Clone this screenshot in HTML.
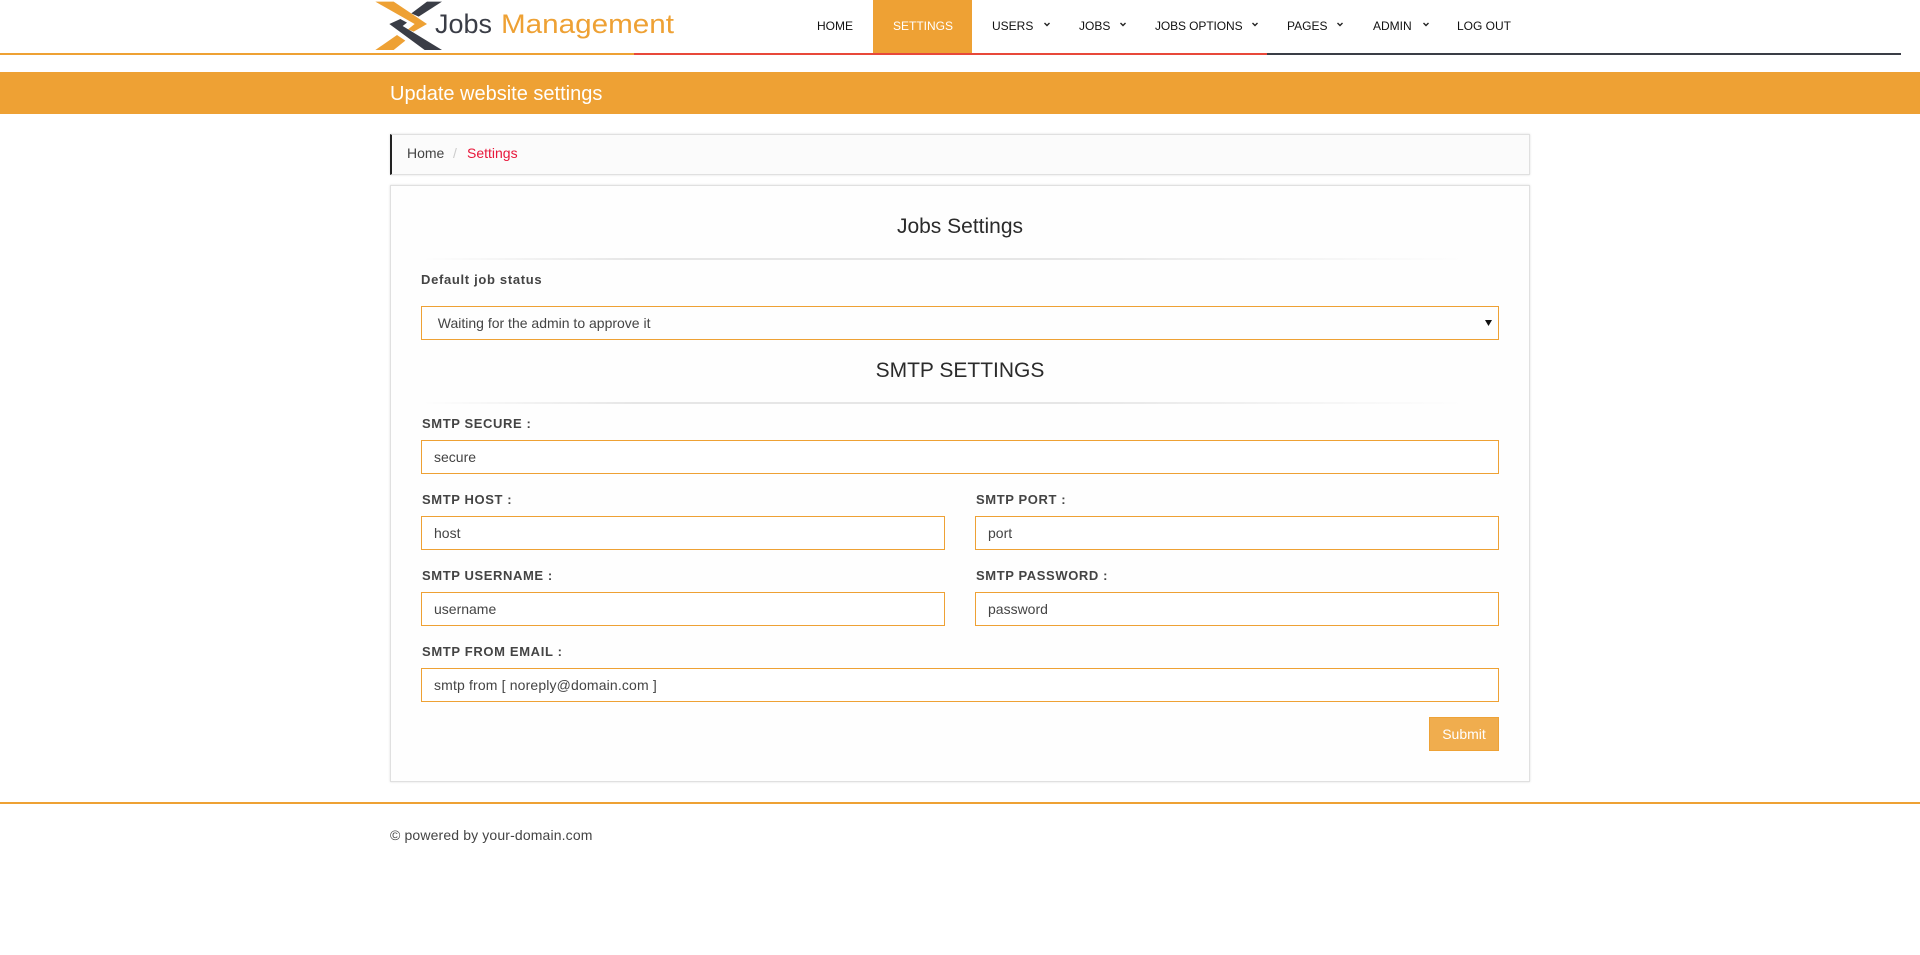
<!DOCTYPE html>
<html lang="en">
<head>
<meta charset="utf-8">
<title>Update website settings</title>
<style>
*{box-sizing:border-box}
html,body{margin:0;padding:0;background:#fff;width:1920px;height:955px;overflow:hidden;font-family:"Liberation Sans",Arial,sans-serif;color:#444;font-size:14px}
.a{position:absolute;white-space:nowrap}
.line{position:absolute;top:53px;height:2px}
.nav{position:absolute;top:0;height:53px;line-height:53px;font-size:12px;color:#111;white-space:nowrap}
.caret{position:absolute;top:22px}
.box{position:absolute;left:390px;width:1140px;border:1px solid #e0e0e0;box-shadow:0 0 2px rgba(0,0,0,.14)}
.hr{position:absolute;left:421px;width:1078px;height:2px;background:linear-gradient(to right,rgba(225,225,225,0),#e6e6e6 20%,#e6e6e6 60%,rgba(225,225,225,0) 97%)}
.ttl{position:absolute;left:390px;width:1140px;text-align:center;color:#2b2b2b;line-height:30px;font-size:21px}
label{position:absolute;font-size:13px;font-weight:bold;letter-spacing:.6px;line-height:18px;color:#444;white-space:nowrap}
input{position:absolute;height:34px;border:1px solid #eea134;background:#fff;padding:0 12px;font:14px "Liberation Sans",Arial,sans-serif;color:#444;outline:0;border-radius:0}
select{position:absolute;left:421px;top:306px;width:1078px;height:34px;border:1px solid #eea134;background:transparent;padding:0 12px 0 8px;font:14px "Liberation Sans",Arial,sans-serif;color:#444;appearance:none;-webkit-appearance:none;border-radius:0;outline:0}
button{position:absolute;left:1429px;top:717px;width:70px;height:34px;background:#f0ad4e;border:1px solid #eea236;color:#fff;font:14px "Liberation Sans",Arial,sans-serif;padding:0;border-radius:0}
</style>
</head>
<body>
<svg class="a" style="left:370px;top:0" width="100" height="56" viewBox="0 0 300 168">
<polygon fill="#eea134" points="16,5 71,5 171,72 131,95 114,88 134,72"/>
<polygon fill="#3a3d46" points="124,40 171,5 216,5 146,50"/>
<polygon fill="#3a3d46" points="58,72 91,57 111,68 98,78 216,150 164,150"/>
<polygon fill="#eea134" points="16,150 81,105 106,122 71,150"/>
</svg>
<svg class="a" style="left:430px;top:0;overflow:visible" width="260" height="50">
<text x="5" y="33" font-family="Liberation Sans" font-size="27" fill="#3a3d46" textLength="57" lengthAdjust="spacingAndGlyphs">Jobs</text>
<text x="71" y="33" font-family="Liberation Sans" font-size="27" fill="#eea134" textLength="173" lengthAdjust="spacingAndGlyphs">Management</text>
</svg>

<div class="line" style="left:0;width:634px;background:#eea134"></div>
<div class="line" style="left:634px;width:633px;background:#e8483a"></div>
<div class="line" style="left:1267px;width:634px;background:#3a3d46"></div>

<div class="a" style="left:873px;top:0;width:99px;height:53px;background:#eea134"></div>
<div class="nav" style="left:817px">HOME</div>
<div class="nav" style="left:893px;color:#fff">SETTINGS</div>
<div class="nav" style="left:992px">USERS</div>
<div class="nav" style="left:1079px">JOBS</div>
<div class="nav" style="left:1155px;letter-spacing:-.1px">JOBS OPTIONS</div>
<div class="nav" style="left:1287px">PAGES</div>
<div class="nav" style="left:1373px">ADMIN</div>
<div class="nav" style="left:1457px">LOG OUT</div>
<svg class="caret" style="left:1044px" width="6" height="5" viewBox="0 0 6 5"><path d="M.5 1L3 3.500 5.500 1" fill="none" stroke="#222" stroke-width="1.400"/></svg>
<svg class="caret" style="left:1120px" width="6" height="5" viewBox="0 0 6 5"><path d="M.5 1L3 3.500 5.500 1" fill="none" stroke="#222" stroke-width="1.400"/></svg>
<svg class="caret" style="left:1252px" width="6" height="5" viewBox="0 0 6 5"><path d="M.5 1L3 3.500 5.500 1" fill="none" stroke="#222" stroke-width="1.400"/></svg>
<svg class="caret" style="left:1337px" width="6" height="5" viewBox="0 0 6 5"><path d="M.5 1L3 3.500 5.500 1" fill="none" stroke="#222" stroke-width="1.400"/></svg>
<svg class="caret" style="left:1423px" width="6" height="5" viewBox="0 0 6 5"><path d="M.5 1L3 3.500 5.500 1" fill="none" stroke="#222" stroke-width="1.400"/></svg>

<div class="a" style="left:0;top:72px;width:1920px;height:42px;background:#eea134"></div>
<div class="a" style="left:390px;top:73px;line-height:42px;font-size:20px;color:#fff">Update website settings</div>

<div class="box" style="top:134px;height:41px;background:#fbfbfb;border-left:2px solid #222"></div>
<div class="a" style="left:407px;top:133px;line-height:41px;color:#444">Home</div>
<div class="a" style="left:453px;top:133px;line-height:41px;color:#ccc">/</div>
<div class="a" style="left:467px;top:133px;line-height:41px;color:#e8173a">Settings</div>

<div class="box" style="top:185px;height:597px;background:#fefefe"></div>

<div class="ttl" style="top:212px">Jobs Settings</div>
<div class="hr" style="top:258px"></div>
<label style="left:421px;top:271px;letter-spacing:.68px">Default job status</label>
<select><option>&nbsp;&nbsp;Waiting for the admin to approve it</option></select>
<svg class="a" style="left:1485px;top:320px" width="7" height="7" viewBox="0 0 7 7"><path d="M0 0H7L3.500 6Z" fill="#111"/></svg>

<div class="ttl" style="top:356px">SMTP SETTINGS</div>
<div class="hr" style="top:402px"></div>

<label style="left:422px;top:415px">SMTP SECURE :</label>
<input style="left:421px;top:440px;width:1078px" value="secure">
<label style="left:422px;top:491px">SMTP HOST :</label>
<input style="left:421px;top:516px;width:524px" value="host">
<label style="left:976px;top:491px">SMTP PORT :</label>
<input style="left:975px;top:516px;width:524px" value="port">
<label style="left:422px;top:567px">SMTP USERNAME :</label>
<input style="left:421px;top:592px;width:524px" value="username">
<label style="left:976px;top:567px">SMTP PASSWORD :</label>
<input style="left:975px;top:592px;width:524px" value="password">
<label style="left:422px;top:643px;letter-spacing:.65px">SMTP FROM EMAIL :</label>
<input style="left:421px;top:668px;width:1078px;letter-spacing:.15px" value="smtp from [ noreply@domain.com ]">
<button>Submit</button>

<div class="a" style="left:0;top:802px;width:1920px;height:2px;background:#eea134"></div>
<div class="a" style="left:390px;top:825px;line-height:20px;color:#444;letter-spacing:.14px">© powered by your-domain.com</div>
</body>
</html>
